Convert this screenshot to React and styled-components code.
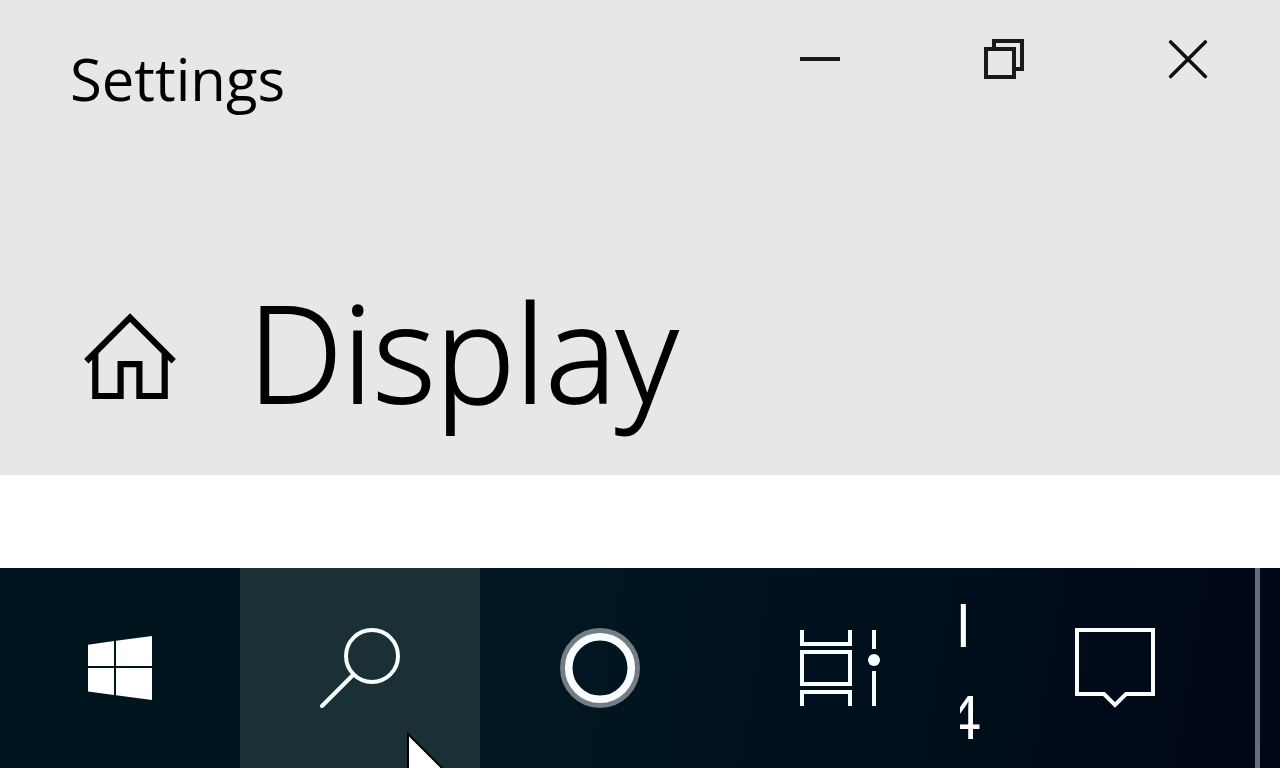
import styled, { createGlobalStyle } from "styled-components";

function App() {
  return (
    <>
      <GlobalStyle />
      <Screen>
        <SettingsHeader>
          <TitleBar>
            <AppName>Settings</AppName>
            <WindowButton aria-label="Minimize">
              <svg width="40" height="40" viewBox="0 0 40 40">
                <path d="M0 20H40" stroke="#191919" strokeWidth="4" />
              </svg>
            </WindowButton>
            <WindowButton aria-label="Restore">
              <svg width="40" height="40" viewBox="0 0 40 40" fill="none" stroke="#191919" strokeWidth="4">
                <path d="M2 10H30V38H2Z" />
                <path d="M10 10V2H38V30H30" />
              </svg>
            </WindowButton>
            <WindowButton aria-label="Close">
              <svg width="40" height="40" viewBox="0 0 40 40" stroke="#111" strokeWidth="3.6" strokeLinecap="round">
                <path d="M2.7 3L37.3 37.6M37.3 3L2.7 37.6" />
              </svg>
            </WindowButton>
          </TitleBar>
          <PageHeading>
            <HomeButton aria-label="Home">
              <svg width="100" height="96" viewBox="0 0 100 96" fill="none" stroke="#000" strokeWidth="6.2">
                <path d="M6.3 53.3L50 9.6L93.7 53.3" />
                <path d="M15.3 43V88H40.6V56.2H59.4V88H84.7V43" />
              </svg>
            </HomeButton>
            <PageTitle>Display</PageTitle>
          </PageHeading>
        </SettingsHeader>
        <Content />
        <Taskbar>
          <TaskbarButton aria-label="Start">
            <svg width="64" height="64" viewBox="0 0 64 64" fill="#fff">
              <path d="M0 8.7L26 5V30H0Z" />
              <path d="M28 4.7L64 0V30H28Z" />
              <path d="M0 32H26V59L0 55.5Z" />
              <path d="M28 32H64V64L28 59.3Z" />
            </svg>
          </TaskbarButton>
          <TaskbarButton aria-label="Search" $active>
            <svg width="80" height="80" viewBox="0 0 80 80" fill="none" stroke="#f8ffff" strokeWidth="4">
              <circle cx="52" cy="28" r="26" />
              <path d="M33.5 46.5L2 78" strokeLinecap="round" />
            </svg>
            <Pointer width="80" height="120" viewBox="0 0 80 120">
              <path
                d="M1 2V92L21 73L34 104L50 97L37 67H66Z"
                fill="#fff"
                stroke="#000"
                strokeWidth="2"
              />
            </Pointer>
          </TaskbarButton>
          <TaskbarButton aria-label="Cortana">
            <svg width="80" height="80" viewBox="0 0 80 80" fill="none">
              <circle cx="40" cy="40" r="37" stroke="#727d84" strokeWidth="6" />
              <circle cx="40" cy="40" r="31.3" stroke="#fafdff" strokeWidth="7.6" />
            </svg>
          </TaskbarButton>
          <TaskbarButton aria-label="Task view">
            <svg width="80" height="80" viewBox="0 0 80 80" fill="none" stroke="#f8ffff" strokeWidth="4">
              <path d="M2 2V16H50V2" />
              <path d="M2 24H50V56H2Z" />
              <path d="M2 78V64H50V78" />
              <path d="M74 2V21M74 43V78" />
              <circle cx="74" cy="32" r="6" fill="#f8ffff" stroke="none" />
            </svg>
          </TaskbarButton>
          <Clock>
            <span>I</span>
            <span>4</span>
          </Clock>
          <ActionCenterButton aria-label="Action center">
            <svg width="80" height="80" viewBox="0 0 80 80" fill="none" stroke="#fff" strokeWidth="4">
              <path d="M2 2H78V66H51L40 77L29 66H2Z" />
            </svg>
          </ActionCenterButton>
          <ShowDesktop aria-label="Show desktop" />
        </Taskbar>
      </Screen>
    </>
  );
}

export default App;

const GlobalStyle = createGlobalStyle`
  * {
    box-sizing: border-box;
  }

  body {
    margin: 0;
    font-family: "Open Sans", "Noto Sans", sans-serif;
  }

  button {
    border: 0;
    padding: 0;
    background: transparent;
  }

  svg {
    display: block;
    flex-shrink: 0;
  }
`;

const Screen = styled.div`
  display: flex;
  flex-direction: column;
  min-height: 100vh;
  overflow: hidden;
  background: #fff;
`;

const SettingsHeader = styled.header`
  padding-bottom: 24px;
  background: #e7e7e7;
`;

const TitleBar = styled.div`
  display: flex;
  align-items: flex-start;
`;

const AppName = styled.span`
  flex: 1;
  padding: 39px 0 0 70px;
  font-size: 58px;
  line-height: 80px;
`;

const WindowButton = styled.button`
  display: flex;
  justify-content: center;
  align-items: center;
  width: 184px;
  height: 118px;
`;

const PageHeading = styled.div`
  display: flex;
  align-items: center;
  gap: 68px;
  margin-top: 132px;
  padding-left: 80px;
`;

const HomeButton = styled.button`
  display: flex;
  padding-top: 10px;
`;

const PageTitle = styled.h1`
  margin: 0;
  font-size: 134px;
  font-weight: 300;
  line-height: 200px;
  -webkit-text-stroke: 2px #000;
`;

const Content = styled.main`
  flex: 1;
`;

const Taskbar = styled.footer`
  display: flex;
  height: 200px;
  background: linear-gradient(100deg, #00151d 0%, #001620 45%, #00101c 70%, #000616 100%);
`;

const TaskbarButton = styled.button`
  position: relative;
  display: flex;
  flex-shrink: 0;
  justify-content: center;
  align-items: center;
  width: 240px;
  overflow: hidden;
  background: ${(props) => (props.$active ? "#1b3036" : "transparent")};
`;

const ActionCenterButton = styled(TaskbarButton)`
  margin-right: 20px;
`;

const Pointer = styled.svg`
  position: absolute;
  top: 164px;
  left: 167px;
`;

const Clock = styled.div`
  display: flex;
  flex: 1;
  flex-direction: column;
  justify-content: center;
  align-items: center;
  padding-top: 4px;
  overflow: hidden;
  color: #fff;
  font-size: 60px;
  font-weight: 500;
  line-height: 92px;

  span {
    margin-left: -28px;
  }
`;

const ShowDesktop = styled.button`
  width: 25px;
  border-left: 5px solid #666c7a;
`;
